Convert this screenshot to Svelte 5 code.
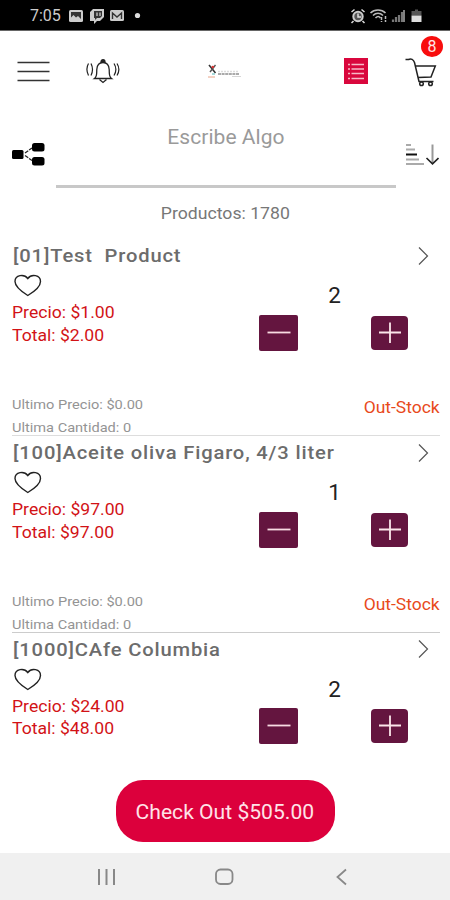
<script lang="ts">
    type Product = {
        code: string;
        name: string;
        price: number;
        quantity: number;
        last?: { price: number; quantity: number };
    };

    let products: Product[] = $state([
        { code: "01", name: "Test  Product", price: 1, quantity: 2, last: { price: 0, quantity: 0 } },
        { code: "100", name: "Aceite oliva Figaro, 4/3 liter", price: 97, quantity: 1, last: { price: 0, quantity: 0 } },
        { code: "1000", name: "CAfe Columbia", price: 24, quantity: 2 },
    ]);

    // items already in the cart that are further down the list
    const restOfCart = 358;

    let search = $state("");
    let total = $derived(restOfCart + products.reduce((sum, p) => sum + p.price * p.quantity, 0));

    function money(value: number) {
        return "$" + value.toFixed(2);
    }

    function remove(product: Product) {
        if (product.quantity > 0) product.quantity--;
    }
</script>

<div class="screen">
    <div class="status">
        <span class="clock">7:05</span>
        <svg class="notifications" width="72" height="16" viewBox="0 0 72 16">
            <rect x="0" y="2" width="14" height="12" rx="1.5" fill="#ccc" />
            <path d="M2 4h10v8H2z" fill="#333" />
            <path d="M2 12V9.500l2.500-2.500 2.500 2.500 2-1.500 3 3v1z" fill="#ccc" />
            <path d="M24 1h11v8l-4 4h-3l-3 3v-3h-4V4z" fill="#ccc" />
            <path d="M25 3h8v5l-2 2h-3l-2 2v-2h-1z" fill="#333" />
            <path d="M28 4.500v3.500M31 4.500v3.500" stroke="#ccc" stroke-width="1.300" />
            <rect x="41" y="2" width="14" height="11" rx="1.500" fill="#ccc" />
            <path d="M43.500 11V5l4.500 4 4.500-4v6" fill="none" stroke="#333" stroke-width="1.400" />
            <circle cx="68.500" cy="7.500" r="2.600" fill="#ddd" />
        </svg>
        <svg class="system" width="74" height="16" viewBox="0 0 74 16">
            <circle cx="8" cy="8.500" r="4.700" fill="#555" stroke="#ccc" stroke-width="2" />
            <path d="M8 5.500v3.500h3M1.500 4l3-2.500M14.500 4l-3-2.500M3.500 13l-2 2M12.500 13l2 2" fill="none" stroke="#ddd" stroke-width="1.500" />
            <path d="M20.500 5c4-4 11-4 15 0M23 7.500c3-3 7-3 10 0M25.500 10c2-2 3.500-2 5 0" fill="none" stroke="#bbb" stroke-width="1.600" />
            <path d="M31.500 9v5M35.500 8v6" stroke="#bbb" stroke-width="1.500" stroke-dasharray="3 1" />
            <path d="M43 14v-2.500M46 14v-5M49 14V7M52 14V4" stroke="#777" stroke-width="2.200" />
            <path d="M54 14V2" stroke="#aaa" stroke-width="1.500" />
            <path d="M65 1.500h3V3h3.500v4.500h-10V3H65z" fill="#555" />
            <path d="M61.500 7.500h10V14h-10z" fill="#ddd" />
        </svg>
    </div>

    <header>
        <button aria-label="Menu">
            <svg width="34" height="24" viewBox="0 0 34 24">
                <path d="M1.500 3.500h32M1.500 12.500h32M1.500 21.500h32" stroke="#333" stroke-width="1.300" />
            </svg>
        </button>
        <button aria-label="Notificaciones" class="bell">
            <svg width="34" height="26" viewBox="0 0 34 26" fill="none" stroke="#222" stroke-width="1.300">
                <path d="M8.500 20.500c3-2 2-6 2.300-9C11.100 7 13.500 4.500 17 4.500s5.900 2.500 6.200 7c.3 3-.7 7 2.300 9z" />
                <path d="M15 4c0-3 4-3 4 0z" fill="#222" />
                <path d="M13.500 21.500l3.500 3 3.500-3" />
                <path d="M2.500 5.500c-2 3.500-2 8 0 12M5 5.500c2 4 2 8 0 12M28 5.500c2.500 4 2.500 8 0 12M31 5.500c2.500 4 2.500 8 0 12" stroke-width="1.200" />
            </svg>
        </button>
        <div class="logo">
            <svg width="10" height="15" viewBox="0 0 10 15">
                <path d="M1 1l6.500 8" stroke="#333" stroke-width="1.600" />
                <path d="M7.500 1L2 8" stroke="#555" stroke-width="1.400" />
                <circle cx="4.800" cy="3" r="1.300" fill="#d33" />
                <path d="M4 10h3" stroke="#8cc" stroke-width="1.500" />
                <path d="M0 13h7" stroke="#e8a488" stroke-width="1" />
            </svg>
            <svg width="24" height="15" viewBox="0 0 24 15">
                <path d="M0 7.500h20" stroke="#ddd" stroke-width="1.500" stroke-dasharray="2 1" />
                <path d="M0 10h21" stroke="#aaa" stroke-width="2" stroke-dasharray="3 .6" />
                <path d="M14 12.500h9" stroke="#ccc" stroke-width=".8" />
            </svg>
        </div>
        <button aria-label="Lista" class="list">
            <svg width="24" height="26" viewBox="0 0 24 26">
                <rect width="24" height="26" fill="#d9073d" />
                <path d="M4 6.500h2M7.500 6.500h12.500M4 11h2M7.500 11h12.500M4 15.500h2M7.500 15.500h12.500M4 20.500h2M7.500 20.500h12.500" stroke="#f7b9c6" stroke-width="1.500" />
            </svg>
        </button>
        <button aria-label="Carrito" class="cart">
            <svg width="32" height="30" viewBox="0 0 32 30" fill="none" stroke="#222" stroke-width="1.500">
                <path d="M.5 2.500h3c2.500-1.500 5 0 6 3L14 24.500h14.500" />
                <path d="M10.500 9h19.800l-4.300 11-13 .5" />
                <circle cx="16.500" cy="26.700" r="1.800" />
                <circle cx="25.500" cy="26.700" r="1.800" />
            </svg>
            <span class="badge">8</span>
        </button>
    </header>

    <div class="search">
        <svg width="33" height="24" viewBox="0 0 33 24">
            <rect x="0" y="7" width="11.500" height="9" rx="1.500" />
            <rect x="20" y="0" width="12.500" height="8.500" rx="2.500" />
            <rect x="20" y="14" width="12.500" height="8.500" rx="2.500" />
            <path d="M13 10l7-5M13 12.500l7 5" stroke="#222" stroke-width="1.300" stroke-dasharray="4 1" />
        </svg>
        <input type="text" placeholder="Escribe Algo" bind:value={search} />
        <svg width="34" height="24" viewBox="0 0 34 24" fill="none">
            <path d="M1 2h5M1 6.500h9M1 16.500h13M1 21h18" stroke="#aaa" stroke-width="2" />
            <path d="M1 11.500h11" stroke="#111" stroke-width="2" />
            <path d="M27.500 1.500v19" stroke="#999" stroke-width="2" />
            <path d="M21.500 15l6 5.800 6-5.800" stroke="#222" stroke-width="1.600" />
        </svg>
    </div>

    <div class="count"><span>Productos: 1780</span></div>

    <main>
        {#each products as product (product.code)}
            <article>
                <div class="title">
                    <h2>[{product.code}]{product.name}</h2>
                    <svg width="11" height="18" viewBox="0 0 11 18" fill="none" stroke="#555" stroke-width="1.200">
                        <path d="M1 .5l8.500 8.500L1 17.500" />
                    </svg>
                </div>
                <div class="body">
                    <div class="prices">
                        <svg class="heart" width="28" height="23" viewBox="0 0 28 23" fill="none" stroke="#222" stroke-width="1.400">
                            <path d="M13.800 21.500C9 18.500 1 13 1 7.500 1 1 10-.5 13.800 4.500 17.500-.5 26.500 1 26.500 7.500c0 5.500-7.700 11-12.700 14z" />
                        </svg>
                        <div class="price">Precio: {money(product.price)}</div>
                        <div class="price">Total: {money(product.price * product.quantity)}</div>
                    </div>
                    <div class="stepper">
                        <div class="quantity">{product.quantity}</div>
                        <button class="minus" aria-label="Menos" onclick={() => remove(product)}>
                            <svg width="24" height="24" viewBox="0 0 24 24">
                                <path d="M.5 11.500h23" stroke="#f8dbe2" stroke-width="1.800" />
                            </svg>
                        </button>
                        <button class="plus" aria-label="Mas" onclick={() => product.quantity++}>
                            <svg width="24" height="24" viewBox="0 0 24 24">
                                <path d="M1 11.500h22M12 1.500v20.500" stroke="#fbe6ea" stroke-width="1.800" />
                            </svg>
                        </button>
                    </div>
                </div>
                {#if product.last}
                    <div class="last">
                        <div>
                            <div class="old">Ultimo Precio: {money(product.last.price)}</div>
                            <div class="old">Ultima Cantidad: {product.last.quantity}</div>
                        </div>
                        <div class="stock">Out-Stock</div>
                    </div>
                {/if}
            </article>
        {/each}
    </main>

    <div class="checkout">
        <button><span>Check Out {money(total)}</span></button>
    </div>

    <nav>
        <svg width="20" height="18" viewBox="0 0 20 18">
            <path d="M2 1v16M9.500 1v16M17 1v16" stroke="#888" stroke-width="2" />
        </svg>
        <svg width="20" height="18" viewBox="0 0 20 18">
            <rect x="1" y="1.500" width="16.500" height="14.500" rx="4.500" fill="none" stroke="#888" stroke-width="1.800" />
        </svg>
        <svg width="20" height="18" viewBox="0 0 20 18">
            <path d="M13 1.500L4.500 9l8.500 7.500" fill="none" stroke="#888" stroke-width="1.800" />
        </svg>
    </nav>
</div>

<style>
    :global(body) {
        background: #fff;
    }

    .screen {
        display: flex;
        flex-direction: column;
        height: 900px;
        overflow: hidden;
        font-family: Roboto, "Liberation Sans", sans-serif;
        color: #777;
    }

    svg {
        display: block;
        flex: none;
    }

    button {
        background: none;
        border: none;
        padding: 0;
        font: inherit;
        cursor: pointer;
    }

    .status {
        display: flex;
        align-items: center;
        height: 31px;
        flex: none;
        box-sizing: border-box;
        padding: 1px 26px 0 30px;
        background: #000;
        border-bottom: 1px solid #666;
    }

    .clock {
        width: 39px;
        font-size: 16px;
        color: #ccc;
    }

    .system {
        margin-left: auto;
    }

    header {
        display: flex;
        align-items: center;
        height: 80px;
        flex: none;
        padding: 0 13px 0 16px;
    }

    .bell {
        margin-left: 36px;
    }

    .logo {
        display: flex;
        margin-left: 88px;
    }

    .list {
        margin-left: auto;
    }

    .cart {
        position: relative;
        margin-left: 37px;
        padding-top: 2px;
    }

    .badge {
        position: absolute;
        top: -19px;
        right: -6px;
        width: 22px;
        height: 21px;
        border-radius: 50%;
        background: #f80d0d;
        color: #ffe4e4;
        font-size: 16px;
        line-height: 21px;
        text-align: center;
    }

    .search {
        display: flex;
        align-items: center;
        height: 77px;
        flex: none;
        padding: 0 11px 0 12px;
    }

    .search svg {
        margin-top: 10px;
    }

    input {
        flex: 1;
        min-width: 0;
        height: 77px;
        margin: 0 9px 0 11px;
        padding: 0 0 22px;
        box-sizing: border-box;
        border: none;
        border-bottom: 3px solid #c8c8c8;
        outline: none;
        background: none;
        font: 21px Roboto, "Liberation Sans", sans-serif;
        letter-spacing: 0.05px;
        text-align: center;
        color: #777;
    }

    input::placeholder {
        color: #9a9a9a;
        opacity: 1;
    }

    .count {
        height: 51.4px;
        flex: none;
        font-size: 16.5px;
        line-height: 52px;
        text-align: center;
    }

    .count span {
        display: inline-block;
        transform: scaleX(1.07);
    }

    main {
        flex: 1;
        min-height: 0;
        overflow: hidden;
        padding: 0 10px 0 12px;
    }

    article {
        height: 196.8px;
        box-sizing: border-box;
        border-bottom: 1px solid #ccc;
    }

    article:first-child {
        border-bottom-color: #ddd;
    }

    .title {
        display: flex;
        justify-content: space-between;
        align-items: center;
        height: 33px;
        padding: 0 11px 0 1px;
    }

    h2 {
        margin: 0;
        font-size: 18px;
        font-weight: 500;
        letter-spacing: 0.75px;
        white-space: pre;
        color: #6c6c6c;
        transform: scaleX(1.12);
        transform-origin: left;
    }

    .body {
        display: flex;
        justify-content: space-between;
        height: 121px;
    }

    .heart {
        margin: 2px 0 5px 2px;
    }

    .price {
        font-size: 16px;
        line-height: 22.5px;
        color: #d21216;
        transform: scaleX(1.1);
        transform-origin: left;
    }

    .stepper {
        display: grid;
        grid-template-columns: 39px 37px;
        grid-template-rows: 42.500px 36px;
        justify-content: space-between;
        align-items: center;
        width: 149px;
        margin-right: 32px;
    }

    .quantity {
        grid-column: span 2;
        padding: 3px 0 0 2px;
        font-size: 22.5px;
        line-height: 38px;
        text-align: center;
        color: #222;
    }

    .stepper button {
        display: flex;
        align-items: center;
        justify-content: center;
        background: #64153f;
    }

    .minus {
        height: 36px;
        border-radius: 2px;
    }

    .plus {
        height: 34px;
        border-radius: 4px;
    }

    .last {
        display: flex;
        justify-content: space-between;
    }

    .old {
        font-size: 13.5px;
        line-height: 22.5px;
        color: #949494;
        transform: scaleX(1.08);
        transform-origin: left;
    }

    .stock {
        font-size: 16px;
        line-height: 29px;
        color: #e84a1c;
        transform: scaleX(1.09);
        transform-origin: right;
    }

    .checkout {
        display: flex;
        justify-content: center;
        height: 73px;
        flex: none;
    }

    .checkout button {
        width: 219px;
        height: 62px;
        padding-top: 2px;
        border-radius: 27px;
        background: #dc003c;
        color: #ffe3e8;
        font-size: 21px;
    }

    .checkout span {
        display: inline-block;
        transform: scaleX(1.005);
    }

    nav {
        display: flex;
        justify-content: center;
        align-items: center;
        gap: 98px;
        height: 47px;
        flex: none;
        background: #f0f0f0;
    }
</style>
